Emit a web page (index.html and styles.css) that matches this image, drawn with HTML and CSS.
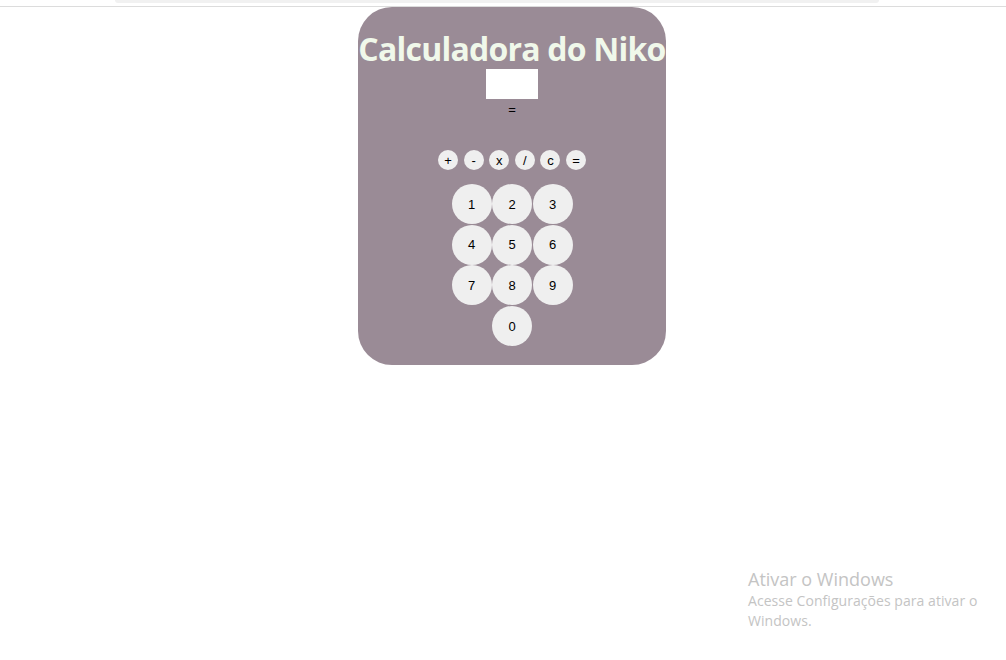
FILE: index.html
```html
<!DOCTYPE html>
<html lang="pt-BR">
<head>
<meta charset="utf-8">
<title>Calculadora do Niko</title>
<link rel="stylesheet" href="styles.css">
</head>
<body>
<div class="topbar"><div class="tab"></div></div>
<main class="page">
  <section class="calc">
    <h1 class="title">Calculadora do Niko</h1>
    <input class="display" type="text">
    <p class="result">=</p>
    <div class="ops">
      <button class="op">+</button>
      <button class="op">-</button>
      <button class="op">x</button>
      <button class="op">/</button>
      <button class="op">c</button>
      <button class="op">=</button>
    </div>
    <div class="keys">
      <button class="key">1</button>
      <button class="key">2</button>
      <button class="key">3</button>
      <button class="key">4</button>
      <button class="key">5</button>
      <button class="key">6</button>
      <button class="key">7</button>
      <button class="key">8</button>
      <button class="key">9</button>
      <button class="key zero">0</button>
    </div>
  </section>
</main>
<div class="activate">
  <div class="act-title">Ativar o Windows</div>
  <div class="act-sub">Acesse Configurações para ativar o Windows.</div>
</div>
</body>
</html>
```

FILE: styles.css
```css
html, body {
  margin: 0;
  padding: 0;
  background: #ffffff;
  font-family: "Liberation Sans", Arial, sans-serif;
}

.topbar {
  height: 6px;
  border-bottom: 1px solid #dcdcdc;
  display: flex;
  justify-content: center;
}

.tab {
  width: 764px;
  height: 3px;
  margin-left: -12px;
  background: #f1f1f1;
  border-radius: 0 0 6px 6px;
}

.page {
  display: flex;
  padding-left: 358px;
}

.calc {
  width: 308px;
  height: 358px;
  box-sizing: border-box;
  background: #9a8b96;
  border-radius: 34px;
  display: flex;
  flex-direction: column;
  align-items: center;
}

.title {
  margin: 22px 0 0 0;
  font-family: "Open Sans", "Noto Sans", sans-serif;
  font-weight: 700;
  font-size: 32px;
  line-height: 40px;
  letter-spacing: -0.78px;
  color: #f0f8ea;
  white-space: nowrap;
}

.display {
  width: 52px;
  height: 30px;
  box-sizing: border-box;
  border: none;
  margin-top: 0;
  padding: 0;
  background: #ffffff;
  outline: none;
}

.result {
  margin: 3px 0 0 0;
  font-size: 13px;
  line-height: 16px;
  color: #000;
}

.ops {
  margin-top: 32px;
  display: flex;
  gap: 5.6px;
}

.op {
  width: 20px;
  height: 20px;
  padding: 0;
  border: none;
  border-radius: 50%;
  background: #efefef;
  font-family: "Liberation Sans", Arial, sans-serif;
  font-size: 13px;
  color: #000;
}

.keys {
  margin-top: 14px;
  display: grid;
  grid-template-columns: repeat(3, 40px);
  gap: 0.7px 0.5px;
}

.key {
  width: 40px;
  height: 40px;
  padding: 0;
  border: none;
  border-radius: 50%;
  background: #efefef;
  font-family: "Liberation Sans", Arial, sans-serif;
  font-size: 13px;
  color: #000;
}

.zero {
  grid-column: 2;
}

.activate {
  position: absolute;
  left: 748px;
  top: 567px;
  width: 250px;
  font-family: "Open Sans", "Noto Sans", sans-serif;
  color: #c4c4c4;
}

.act-title {
  font-size: 18px;
  line-height: 24px;
}

.act-sub {
  font-size: 14px;
  line-height: 20px;
  letter-spacing: 0.05px;
}
```
